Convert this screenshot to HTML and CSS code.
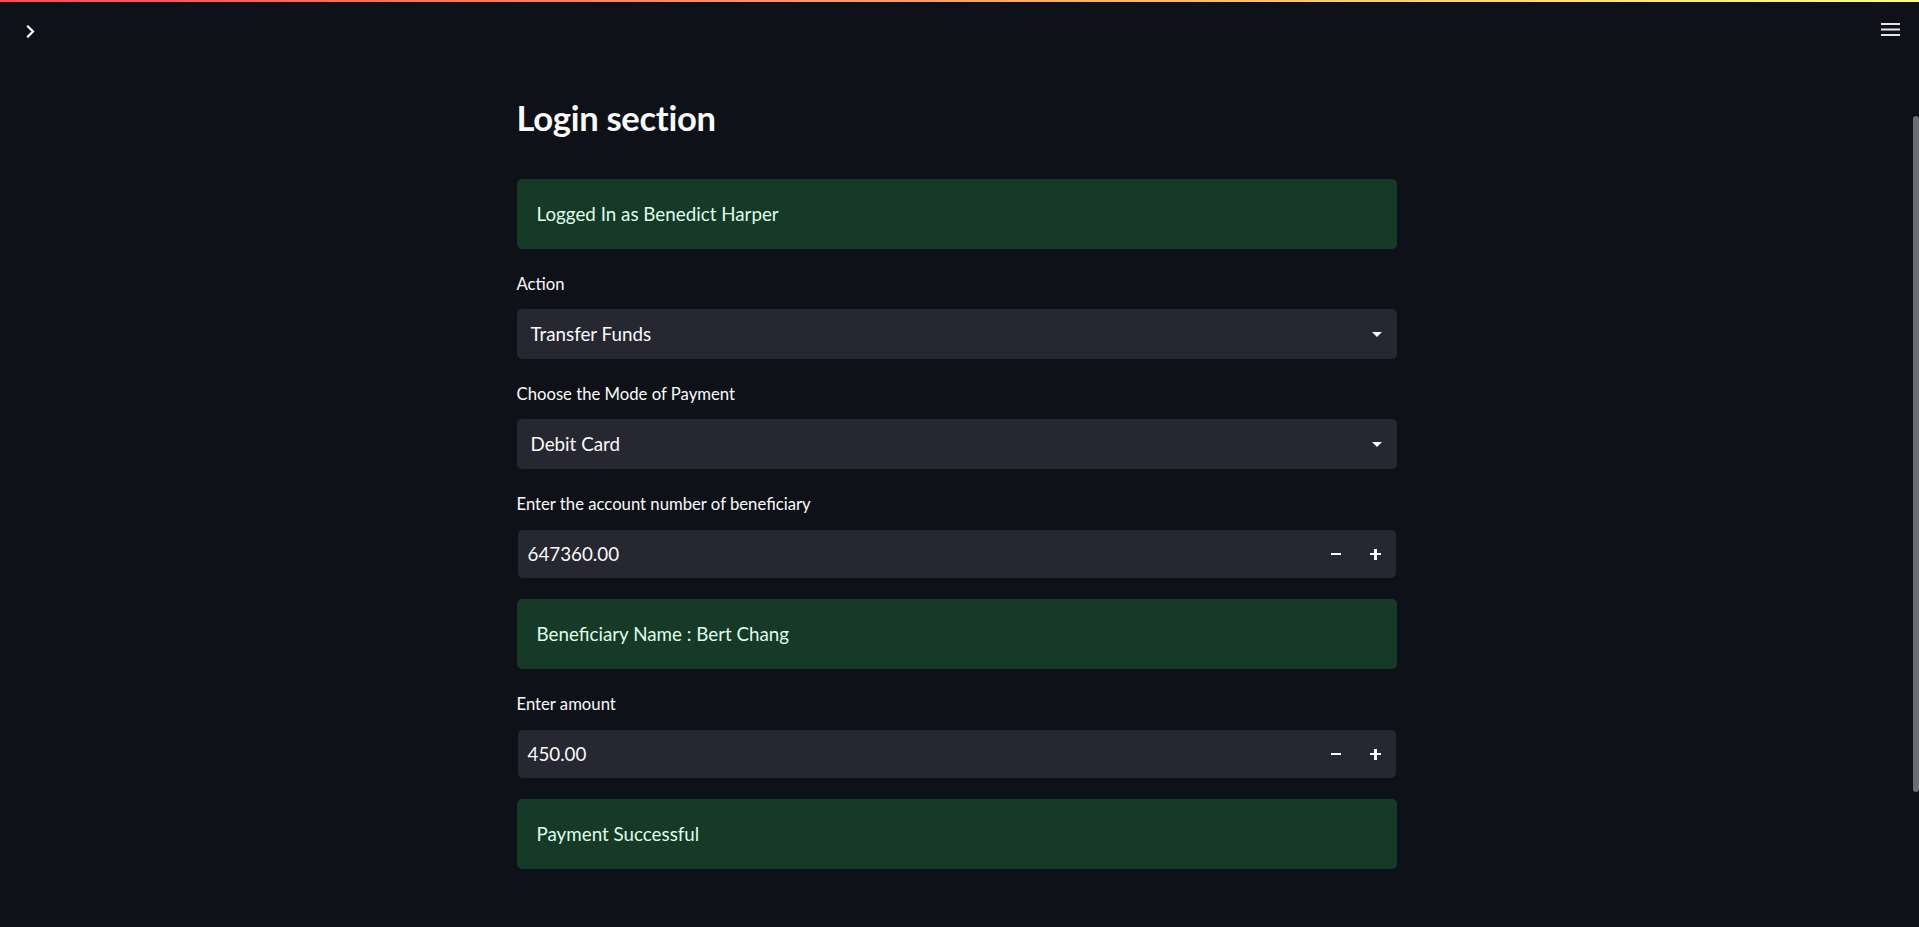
FILE: index.html
```html
<!DOCTYPE html>
<html lang="en">
<head>
<meta charset="utf-8">
<title>Login section</title>
<link rel="stylesheet" href="styles.css">
</head>
<body>
<div class="app">
  <div class="page">
    <div class="decoration"></div>
    <header class="topbar">
      <button class="icon-btn chevron" aria-label="Open sidebar">
        <svg width="12" height="13" viewBox="0 0 12 13"><polyline points="3,1.5 8,6.5 3,11.5" fill="none" stroke="#fafafa" stroke-width="2.2" stroke-linecap="square"/></svg>
      </button>
      <button class="icon-btn menu" aria-label="Menu">
        <svg width="20" height="14" viewBox="0 0 20 14"><rect x="0" y="1" width="19" height="2" fill="#e6e6e6"/><rect x="0" y="6.5" width="19" height="2" fill="#e6e6e6"/><rect x="0" y="12" width="19" height="2" fill="#e6e6e6"/></svg>
      </button>
    </header>
    <main class="block">
      <h1 class="title">Login section</h1>
      <div class="alert">Logged In as Benedict Harper</div>
      <div class="field">
        <label class="label">Action</label>
        <div class="select"><span>Transfer Funds</span><span class="caret"></span></div>
      </div>
      <div class="field">
        <label class="label">Choose the Mode of Payment</label>
        <div class="select"><span>Debit Card</span><span class="caret"></span></div>
      </div>
      <div class="field">
        <label class="label">Enter the account number of beneficiary</label>
        <div class="number">
          <span class="value">647360.00</span>
          <span class="step"><span class="minus"></span></span>
          <span class="step"><span class="plus"></span></span>
        </div>
      </div>
      <div class="alert">Beneficiary Name : Bert Chang</div>
      <div class="field">
        <label class="label">Enter amount</label>
        <div class="number">
          <span class="value">450.00</span>
          <span class="step"><span class="minus"></span></span>
          <span class="step"><span class="plus"></span></span>
        </div>
      </div>
      <div class="alert">Payment Successful</div>
    </main>
  </div>
  <div class="scroll-track"><div class="scroll-thumb"></div></div>
</div>
</body>
</html>
```

FILE: styles.css
```css
html, body {
  margin: 0;
  padding: 0;
  background: #0e1117;
  height: 100%;
  overflow: hidden;
}
body {
  font-family: Lato, "Liberation Sans", sans-serif;
  color: #fafafa;
}
.app {
  display: flex;
  height: 927px;
}
.page {
  flex: 1;
  display: flex;
  flex-direction: column;
  min-width: 0;
}
.decoration {
  height: 2px;
  background: linear-gradient(90deg, rgb(255, 75, 75), rgb(255, 253, 128));
  margin-right: -6px;
}
.topbar {
  height: 58px;
  display: flex;
  justify-content: space-between;
  align-items: flex-start;
}
.icon-btn {
  background: none;
  border: 0;
  padding: 0;
  display: block;
  line-height: 0;
}
.chevron {
  margin: 23px 0 0 25px;
}
.menu {
  margin: 20px 12px 0 0;
}
.block {
  width: 880px;
  margin: 0 auto;
  padding-top: 36px;
  display: flex;
  flex-direction: column;
  gap: 20px;
}
.title {
  margin: 0 0 20px 0;
  font-size: 34.6px;
  line-height: 43px;
  font-weight: 700;
  letter-spacing: -0.3px;
}
.alert {
  height: 70px;
  box-sizing: border-box;
  background: #173928;
  border-radius: 5px;
  color: #dffde9;
  display: flex;
  align-items: center;
  padding: 0 20px 2px 20px;
  font-size: 18.8px;
}
.field {
  display: flex;
  flex-direction: column;
}
.label {
  height: 40px;
  box-sizing: border-box;
  padding-top: 2px;
  line-height: 26px;
  font-size: 16.7px;
}
.select {
  height: 50px;
  box-sizing: border-box;
  background: #262730;
  border-radius: 5px;
  display: flex;
  align-items: center;
  justify-content: space-between;
  padding: 0 15px 2px 14px;
  font-size: 18.8px;
}
.caret {
  width: 0;
  height: 0;
  border-left: 5px solid transparent;
  border-right: 5px solid transparent;
  border-top: 5px solid #fafafa;
  margin-top: 3px;
}
.number {
  height: 50px;
  box-sizing: border-box;
  border: 1px solid #0e1117;
  background: #262730;
  border-radius: 6px;
  display: flex;
  align-items: stretch;
  font-size: 18.8px;
}
.value {
  flex: 1;
  display: flex;
  align-items: center;
  padding: 0 0 2px 10px;
}
.step {
  width: 40px;
  display: flex;
  align-items: center;
  justify-content: center;
  position: relative;
}
.minus {
  width: 10px;
  height: 2.5px;
  background: #fafafa;
}
.plus {
  width: 11px;
  height: 11px;
  position: relative;
}
.plus::before, .plus::after {
  content: "";
  position: absolute;
  background: #fafafa;
}
.plus::before {
  left: 0;
  top: 4.25px;
  width: 11px;
  height: 2.5px;
}
.plus::after {
  top: 0;
  left: 4.25px;
  width: 2.5px;
  height: 11px;
}
.scroll-track {
  width: 6px;
  padding-top: 116px;
}
.scroll-thumb {
  height: 676px;
  background: #6c6d72;
  border-radius: 3px;
}
```
